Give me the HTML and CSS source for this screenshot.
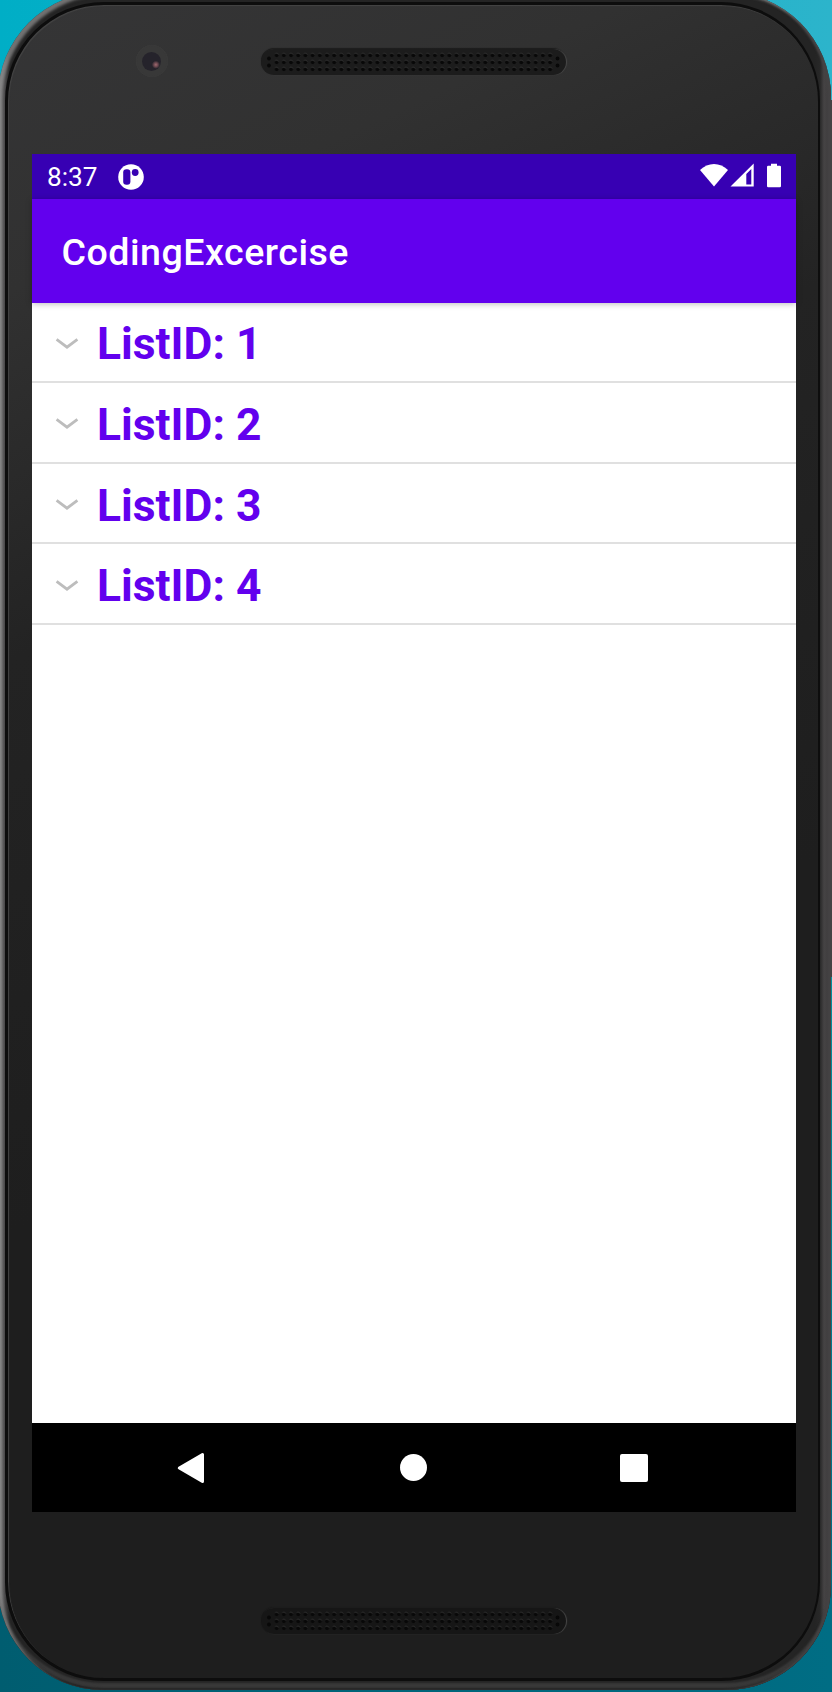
FILE: index.html
```html
<!DOCTYPE html>
<html lang="en">
<head>
<meta charset="utf-8">
<title>CodingExcercise</title>
<link rel="stylesheet" href="styles.css">
</head>
<body>
<svg class="defs" width="0" height="0" aria-hidden="true">
  <defs>
    <pattern id="holes" x="11.9" y="3" width="7.22" height="7" patternUnits="userSpaceOnUse">
      <circle cx="3.8" cy="3.3" r="1.9" fill="#080808"/>
      <path d="M2.4 1.6a2 2 0 0 1 3.2 1" fill="none" stroke="#3a3a3a" stroke-width=".6"/>
    </pattern>
    <symbol id="grille" viewBox="0 0 306 26">
      <rect x="12" y="3" width="281.6" height="21" fill="url(#holes)"/>
      <g fill="#080808"><circle cx="8" cy="9.5" r="1.9"/><circle cx="8" cy="16.5" r="1.9"/><circle cx="297.5" cy="9.5" r="1.9"/><circle cx="297.5" cy="16.5" r="1.9"/></g>
    </symbol>
    <symbol id="chevron" viewBox="0 0 24 14"><path d="M1.600 2.400 12 10.200l10.400-7.800" fill="none" stroke="#bdbdbd" stroke-width="2.8"/></symbol>
  </defs>
</svg>
<div class="desktop">
  <div class="side-edge"></div>
  <div class="phone">
    <div class="face">
      <div class="top-bezel">
        <span class="camera"><span class="lens"></span></span>
        <svg class="speaker" width="305" height="26"><use href="#grille"/></svg>
      </div>
      <div class="screen">
        <div class="status">
          <span class="time">8:37</span>
          <svg class="app-icon" width="26" height="26" viewBox="0 0 26 26"><circle cx="13" cy="13" r="12.8" fill="#fff"/><rect x="5.2" y="5.3" width="7.2" height="15.5" rx="3.2" fill="#3700b3"/><circle cx="17.2" cy="8.5" r="3.4" fill="#3700b3"/></svg>
          <svg class="signals" width="82" height="26" viewBox="0 0 82 26" fill="#fff">
            <path d="M0 7C8-1 20-1 28 7L14 23.5Z"/>
            <path fill-rule="evenodd" d="M30.5 23.5 53.7.5v23ZM46.3 11v10.4h5V6Z"/>
            <path d="M71 .7h6v2.1h2.8q1.2 0 1.2 1.2v19q0 1.2-1.2 1.2H68.200q-1.200 0-1.200-1.200V4q0-1.200 1.200-1.200H71Z"/>
          </svg>
        </div>
        <div class="appbar">CodingExcercise</div>
        <div class="list">
          <div class="row"><svg class="chev" width="24" height="14"><use href="#chevron"/></svg><span>ListID: 1</span></div>
          <div class="row"><svg class="chev" width="24" height="14"><use href="#chevron"/></svg><span>ListID: 2</span></div>
          <div class="row"><svg class="chev" width="24" height="14"><use href="#chevron"/></svg><span>ListID: 3</span></div>
          <div class="row"><svg class="chev" width="24" height="14"><use href="#chevron"/></svg><span>ListID: 4</span></div>
        </div>
        <div class="nav">
          <svg width="28" height="32" viewBox="0 0 28 32"><path d="M2.300 16 25.500 2.500v27Z" fill="#fff" stroke="#fff" stroke-width="3" stroke-linejoin="round"/></svg>
          <span class="home"></span>
          <span class="recent"></span>
        </div>
      </div>
      <div class="bottom-bezel">
        <svg class="speaker low" width="305" height="26"><use href="#grille"/></svg>
      </div>
    </div>
  </div>
</div>
</body>
</html>
```
FILE: styles.css
```css
* { box-sizing: border-box; }
body { margin: 0; font-family: Roboto, "Noto Sans", sans-serif; }
.defs { position: absolute; }
.desktop {
  position: relative;
  width: 832px;
  height: 1692px;
  overflow: hidden;
  background: linear-gradient(90deg, #00aec6, #2cb4cb) top / 100% 500px no-repeat, linear-gradient(90deg, #005d70, #006d84);
}
.desktop::before {
  content: "";
  position: absolute;
  right: 0;
  top: 976px;
  width: 4px;
  height: 600px;
  background: linear-gradient(#00929f, #006d84);
}
.side-edge {
  position: absolute;
  left: 828px;
  top: 100px;
  width: 4px;
  height: 877px;
  background: #454344;
}
.phone {
  position: relative;
  width: 833px;
  height: 1698px;
  margin: -8px 0 0 -2px;
  padding: 10px 11px 9px 7px;
  border-radius: 105px;
  background: linear-gradient(90deg, #777 0, #484748 7px, #242424 12px, #242424 817px, #282828 822px, #454344 826px, #3e3c3d 100%);
}
.phone::before {
  content: "";
  position: absolute;
  inset: 0;
  border-radius: inherit;
  box-shadow: inset 4px 3px 3px #999a, inset -3px 0 2px #454344, inset 0 -2px 2px #222, inset 0 -7px 2px #393939;
}
.face {
  position: relative;
  display: flex;
  flex-direction: column;
  align-items: flex-start;
  height: 1679px;
  padding-left: 24px;
  border: 3px solid #0d0d0d;
  border-right-width: 2px;
  border-radius: 99px;
  box-shadow: inset 1px 1px 1px #444;
  background: linear-gradient(155deg, #353536 0, #313131 14%, #232323 32%, #1e1e1e 60%);
}
.top-bezel {
  display: flex;
  align-items: flex-start;
  height: 149px;
  padding: 40px 0 0 103.5px;
}
.camera {
  display: grid;
  place-items: center;
  width: 32px;
  height: 32px;
  border-radius: 50%;
  background: #383838;
  box-shadow: inset 0 0 1px #444;
}
.lens {
  width: 19px;
  height: 19px;
  border-radius: 50%;
  background: radial-gradient(circle at 73% 67%, #a16a70 0, #6b4850 2px, transparent 4px), #25232b;
}
.speaker {
  display: block;
  margin: 4px 0 0 93.500px;
  border-radius: 13px;
  background: #1c1c1c;
  box-shadow: 1px 0 1px #4a4a4a, 0 -1px 1px #181818;
}
.bottom-bezel { padding-top: 96px; }
.low { margin: 0 0 0 229px; background: #161616; }
.screen {
  display: flex;
  flex-direction: column;
  width: 764px;
  height: 1358px;
  background: #fff;
}
.status {
  display: flex;
  align-items: flex-start;
  height: 44.500px;
  padding: 0 14px 0 15px;
  background: #3700b3;
  color: #fff;
}
.time { width: 71px; font-size: 26.200px; line-height: 31px; padding-top: 8px; }
.app-icon { margin-top: 9.500px; }
.signals { margin: 9.200px 0 0 auto; }
.appbar {
  height: 104px;
  padding-left: 29.500px;
  background: #6200ee;
  color: #fff;
  font-size: 37.600px;
  font-weight: 500;
  line-height: 106px;
  letter-spacing: .5px;
  box-shadow: 0 1px 6px #0004;
}
.list { flex: 1; }
.row {
  display: flex;
  align-items: center;
  height: 80.670px;
  padding-left: 22.600px;
  border-bottom: 2px solid #e0e0e0;
  color: #6200ee;
  font-size: 44.400px;
  font-weight: 700;
  line-height: 52px;
}
.chev { margin-top: 4px; }
.row span { margin-left: 18.400px; padding-top: 5px; }
.nav {
  display: flex;
  align-items: center;
  height: 89px;
  padding-left: 145px;
  background: #000;
}
.home { width: 27px; height: 27px; margin-left: 195px; border-radius: 50%; background: #fff; }
.recent { width: 28px; height: 28px; margin-left: 193px; border-radius: 2px; background: #fff; }
```
